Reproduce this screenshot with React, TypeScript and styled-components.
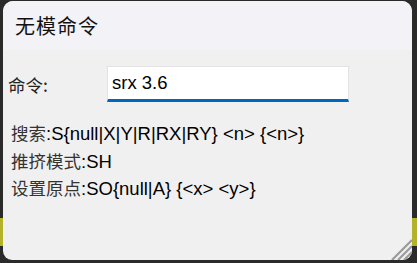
import React, { useState } from 'react'
import styled, { createGlobalStyle } from 'styled-components'

const GlobalStyle = createGlobalStyle`
  html, body {
    margin: 0;
    padding: 0;
    width: 417px;
    height: 263px;
    overflow: hidden;
  }
  body {
    background: linear-gradient(
      to bottom,
      #2a2a2a 0px,
      #2a2a2a 218px,
      #b3b329 218px,
      #b3b329 246px,
      #2a2a2a 246px
    );
    font-family: 'Liberation Sans', 'Noto Sans CJK SC', sans-serif;
  }
`

const Dialog = styled.div`
  position: relative;
  margin: 1px 0 0 3px;
  width: 409px;
  height: 259px;
  border-radius: 10px 10px 9px 9px;
  background: #f0f0f0;
  overflow: hidden;
  display: flex;
  flex-direction: column;
`

const TitleBar = styled.div`
  height: 49px;
  flex-shrink: 0;
  background: #f2f2f7;
  display: flex;
  align-items: center;
  padding-left: 12px;
  box-sizing: border-box;
`

const Title = styled.span`
  font-family: 'Noto Sans CJK SC', sans-serif;
  font-size: 20px;
  color: #111;
  letter-spacing: 1px;
`

const Body = styled.div`
  display: flex;
  flex-direction: column;
  padding: 16px 0 0 5px;
`

const FieldRow = styled.div`
  display: flex;
  align-items: center;
  height: 36px;
`

const Label = styled.label`
  width: 99px;
  font-family: 'Noto Sans CJK SC', sans-serif;
  font-size: 17.5px;
  color: #222;
`

const Input = styled.input`
  width: 242px;
  height: 36px;
  box-sizing: border-box;
  border: 1px solid #e3e3e3;
  border-bottom: 3px solid #0067c0;
  background: #fff;
  padding: 0 0 0 4px;
  font-family: 'Liberation Sans', sans-serif;
  font-size: 18.5px;
  color: #000;
  outline: none;
`

const HelpList = styled.div`
  display: flex;
  flex-direction: column;
  margin-top: 17px;
  padding-left: 3px;
`

const HelpLine = styled.div`
  height: 27.5px;
  line-height: 27.5px;
  font-size: 18.5px;
  color: #000;
  white-space: nowrap;
`

const Cn = styled.span`
  font-family: 'Noto Sans CJK SC', sans-serif;
  font-size: 17.5px;
  color: #333;
`

const Grip = styled.svg`
  position: absolute;
  right: 0;
  bottom: 0;
`

export default function App (): JSX.Element {
  const [value, setValue] = useState('srx 3.6')

  return (
    <>
      <GlobalStyle />
      <Dialog>
        <TitleBar>
          <Title>无模命令</Title>
        </TitleBar>
        <Body>
          <FieldRow>
            <Label>命令:</Label>
            <Input value={value} onChange={(e) => { setValue(e.target.value) }} />
          </FieldRow>
          <HelpList>
            <HelpLine><Cn>搜索</Cn>:S{'{'}null|X|Y|R|RX|RY{'}'} &lt;n&gt; {'{'}&lt;n&gt;{'}'}</HelpLine>
            <HelpLine><Cn>推挤模式</Cn>:SH</HelpLine>
            <HelpLine><Cn>设置原点</Cn>:SO{'{'}null|A{'}'} {'{'}&lt;x&gt; &lt;y&gt;{'}'}</HelpLine>
          </HelpList>
        </Body>
        <Grip width="22" height="22" viewBox="0 0 22 22">
          <path d="M22 2 L2 22 M22 8 L8 22 M22 14 L14 22" stroke="#9a9a9a" strokeWidth="2.2" />
        </Grip>
      </Dialog>
    </>
  )
}
